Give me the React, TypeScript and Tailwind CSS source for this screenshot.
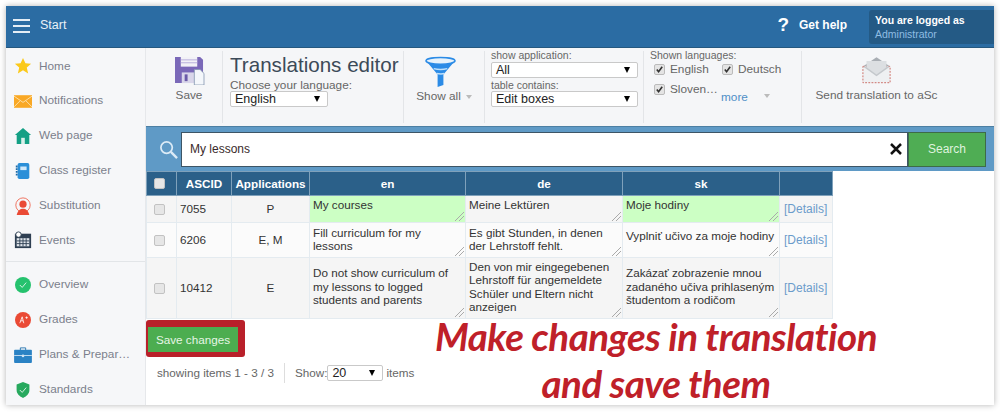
import { ReactNode } from 'react';

const Divider = () => <div className="w-px self-stretch my-[3px] bg-[#e3e5e8]" />;

const Star = () => (
  <svg viewBox="0 0 20 20" className="w-[18px] h-[18px]"><path d="M10 1l2.7 6 6.3.6-4.8 4.2 1.5 6.4L10 14.8l-5.7 3.4 1.5-6.4L1 7.6 7.3 7z" fill="#fbc91b" /></svg>
);
const Mail = () => (
  <svg viewBox="0 0 20 14" className="w-[18px] h-[13px]"><rect width="20" height="14" fill="#f9a825" /><path d="M0 1l10 7 10-7M0 13l7-7M20 13l-7-7" stroke="#fde3b0" strokeWidth="1" fill="none" /></svg>
);
const House = () => (
  <svg viewBox="0 0 20 20" className="w-[18px] h-[18px]"><path d="M10 1l9 8h-2v10H3V9H1z" fill="#14a085" /><rect x="8" y="12" width="4" height="7" fill="#d8f0ea" /></svg>
);
const Book = () => (
  <svg viewBox="0 0 20 20" className="w-[18px] h-[18px]"><rect x="4" y="1" width="13" height="18" rx="2" fill="#2b8fd8" /><rect x="7" y="5" width="7" height="4" fill="#cfe8fa" /><path d="M3 4v12" stroke="#1c6aa8" strokeWidth="2" strokeDasharray="2 1" /></svg>
);
const Person = () => (
  <svg viewBox="0 0 20 20" className="w-[18px] h-[18px]"><circle cx="10" cy="9" r="8" fill="none" stroke="#ef6a55" strokeWidth="1" /><circle cx="10" cy="8" r="4" fill="#ea4a35" /><path d="M3 20c1-5 4-7 7-7s6 2 7 7z" fill="#ea4a35" /></svg>
);
const Calendar = () => (
  <svg viewBox="0 0 20 20" className="w-[18px] h-[18px]"><rect x="1" y="3" width="18" height="16" fill="#2e3f52" /><rect x="3" y="8" width="14" height="9" fill="#dfe4ea" /><path d="M3 11h14M3 14h14M6.500 8v9M10 8v9M13.500 8v9" stroke="#2e3f52" strokeWidth="1" /><circle cx="5" cy="4" r="3" fill="#fff" stroke="#2e3f52" /></svg>
);
const Check = ({ color }: { color: string }) => (
  <svg viewBox="0 0 20 20" className="w-4 h-4"><circle cx="10" cy="10" r="10" fill={color} /><path d="M6 10l3 3 5-6" stroke="#fff" strokeWidth="1" fill="none" /></svg>
);
const Grade = () => (
  <svg viewBox="0 0 20 20" className="w-4 h-4"><circle cx="10" cy="10" r="10" fill="#ea4a35" /><path d="M6 14l3-8 2 8M7 11h3M13 7h3M14.500 5.500v3" stroke="#fff" strokeWidth="1" fill="none" /></svg>
);
const Briefcase = () => (
  <svg viewBox="0 0 20 18" className="w-[18px] h-4"><path d="M7 4V1h6v3" stroke="#1f70ad" fill="none" /><rect y="3" width="20" height="15" rx="1" fill="#2a82c4" /><rect y="9" width="20" height="1" fill="#cfe3f3" /><circle cx="10" cy="10" r="1.500" fill="#cfe3f3" /></svg>
);
const Shield = () => (
  <svg viewBox="0 0 20 20" className="w-4 h-[18px]"><path d="M10 0l8 3v7c0 5-4 8-8 10-4-2-8-5-8-10V3z" fill="#27a95e" /><path d="M6 10l3 3 5-6" stroke="#fff" strokeWidth="1" fill="none" /></svg>
);

const Floppy = () => (
  <svg viewBox="0 0 32 30" className="w-[31px] h-[29px]">
    <path d="M1 1h26l3 3v24H1z" fill="#7a68b8" />
    <rect x="7" y="1" width="17" height="10" fill="#f2f2f7" />
    <path d="M7 4h17M7 7h17" stroke="#b7aedb" />
    <rect x="8" y="17" width="14" height="11" fill="#d9d6ea" />
    <rect x="11" y="19" width="3" height="7" fill="#6a5aa8" />
    <path d="M21 14h6l4 4v12H21z" fill="#f4f7fb" stroke="#7f93ad" strokeWidth="0.800" />
  </svg>
);
const Funnel = () => (
  <svg viewBox="0 0 32 32" className="w-[31px] h-[31px] mr-[7px]">
    <path d="M1 5c3 3 27 3 30 0L19 19v11l-6 2V19z" fill="#2b8be6" />
    <path d="M9 13c4 1 10 1 14 0M12 18c3 .6 6 .6 8 0" stroke="#bfe0fb" strokeWidth="1.500" fill="none" />
    <ellipse cx="16" cy="5" rx="15" ry="3.500" fill="#e7f2fb" stroke="#2b8be6" strokeWidth="1.500" />
  </svg>
);
const Envelope = () => (
  <svg viewBox="0 0 32 30" className="w-[29px] h-[28px]">
    <path d="M16 1l15 10H1z" fill="#a9aeb4" />
    <rect x="1" y="11" width="30" height="18" fill="#eef0f2" stroke="#c9645c" strokeWidth="1" strokeDasharray="2 1.500" />
    <path d="M1 11l15 11 15-11z" fill="#c4c8cc" />
    <path d="M5 5h22v7l-11 8-11-8z" fill="#dcdfe2" />
  </svg>
);

const navTop: [ReactNode, string][] = [
  [<Star />, 'Home'],
  [<Mail />, 'Notifications'],
  [<House />, 'Web page'],
  [<Book />, 'Class register'],
  [<Person />, 'Substitution'],
  [<Calendar />, 'Events'],
];
const navBottom: [ReactNode, string][] = [
  [<Check color="#25c26e" />, 'Overview'],
  [<Grade />, 'Grades'],
  [<Briefcase />, 'Plans & Prepar…'],
  [<Shield />, 'Standards'],
];

const NavItem = ({ icon, label }: { icon: ReactNode; label: string }) => (
  <div className="h-[34.800px] flex items-center">
    <div className="w-[33px] flex justify-center">{icon}</div>
    <span className="text-[11.800px] text-[#7b7f8c]">{label}</span>
  </div>
);

const Select = ({ value, className }: { value: string; className: string }) => (
  <div className={`h-[16px] bg-white border border-[#c9c9c9] rounded-[2px] flex items-center justify-between pl-1 pr-[7px] text-[12.500px] text-[#222] ${className}`}>
    <span>{value}</span>
    <span className="w-0 h-0 border-x-[3.500px] border-x-transparent border-t-[6px] border-t-black" />
  </div>
);

const LangCheck = ({ label, className }: { label: string; className: string }) => (
  <div className={`flex items-center gap-[5px] text-[11.800px] text-[#666] ${className}`}>
    <span className="w-[11px] h-[11px] rounded-[2px] bg-[#e4e4e4] border border-[#bbb] flex items-center justify-center">
      <svg viewBox="0 0 10 10" className="w-[9px] h-[9px]"><path d="M2 5l2 2.500L8 2" stroke="#333" strokeWidth="1.800" fill="none" /></svg>
    </span>
    {label}
  </div>
);

const Box = () => <span className="block w-[11px] h-[11px] rounded-[2px] bg-[#e6e6e6] border border-[#c2c2c2]" />;

const Grip = () => (
  <svg viewBox="0 0 9 9" className="absolute right-px bottom-px w-[9px] h-[9px]"><path d="M0 9l9-9M4 9l5-5" stroke="#aaa" strokeWidth="1" /></svg>
);

const Cell = ({ text, green, pad }: { text: ReactNode; green?: boolean; pad: string }) => (
  <td className={`relative border border-[#e4ebf0] p-0 ${green ? 'bg-[#ccffc4]' : ''} ${pad}`}>
    <div className="px-[3px] leading-[13.400px] text-[#333]">{text}</div>
    <Grip />
  </td>
);

const rows = [
  { h: 'h-[27px]', bg: 'bg-[#f5f5f5]', id: '7055', app: 'P', en: 'My courses', de: 'Meine Lektüren', sk: 'Moje hodiny', green: true, pad: 'align-top pt-[2px]', skPad: 'align-top pt-[2px]' },
  { h: 'h-[35px]', bg: 'bg-[#fbfbfb]', id: '6206', app: 'E, M', en: 'Fill curriculum for my lessons', de: 'Es gibt Stunden, in denen der Lehrstoff fehlt.', sk: 'Vyplniť učivo za moje hodiny', green: false, pad: 'pb-[2px]', skPad: 'pb-[8px]' },
  { h: 'h-[61px]', bg: 'bg-[#f5f5f5]', id: '10412', app: 'E', en: 'Do not show curriculum of my lessons to logged students and parents', de: 'Den von mir eingegebenen Lehrstoff für angemeldete Schüler und Eltern nicht anzeigen', sk: 'Zakázať zobrazenie mnou zadaného učiva prihlaseným študentom a rodičom', green: false, pad: 'pb-[3px]', skPad: 'pb-[3px]' },
];

const App = () => {
  return (
    <div className="w-[1000px] h-[414px] bg-white pt-[6px] px-[6px] overflow-hidden font-['Liberation_Sans',Arial,sans-serif]">
      <div className="relative w-[988px] h-[399px] bg-white shadow-[0_0_6px_rgba(0,0,0,0.3)] flex flex-col">
        {/* top bar */}
        <div className="h-[42px] shrink-0 bg-[#2b6ca3] border-b border-[#25587f] flex items-center pl-[7px] pb-[2px] text-white">
          <div className="w-[17px] flex flex-col gap-[4px]">
            <span className="h-[2px] bg-[#e4edf5]" />
            <span className="h-[2px] bg-[#e4edf5]" />
            <span className="h-[2px] bg-[#e4edf5]" />
          </div>
          <span className="ml-[10px] text-[12.500px] text-[#e8f0f7]">Start</span>
          <span className="ml-auto text-[19px] font-bold">?</span>
          <span className="ml-[10px] mb-[1px] text-[12px] font-bold">Get help</span>
          <div className="ml-[22px] mt-[2px] w-[125px] h-[34px] bg-[#245a85] rounded-l-[3px] pl-[6px] pt-[3px] text-[10.500px] leading-[14px]">
            <div className="font-bold">You are logged as</div>
            <div className="text-[#8fbde3]">Administrator</div>
          </div>
        </div>

        <div className="flex flex-1 min-h-0">
          {/* sidebar */}
          <div className="w-[140px] shrink-0 bg-[#f6f7f9] border-r border-[#e6e8eb] pt-[1px] overflow-hidden">
            {navTop.map(([icon, label]) => <NavItem key={label} icon={icon} label={label} />)}
            <div className="h-px bg-[#e2e5e8] mt-[3px] mb-[6px]" />
            {navBottom.map(([icon, label]) => <NavItem key={label} icon={icon} label={label} />)}
          </div>

          <div className="relative flex-1 min-w-0">
            {/* toolbar */}
            <div className="h-[78px] bg-[#f5f6f8] flex text-[#666] text-[11.800px]">
              <div className="w-[76px] flex flex-col items-center pt-[8px] pl-[10px]">
                <Floppy />
                <span className="mt-[2px]">Save</span>
              </div>
              <Divider />
              <div className="w-[180px] pl-[7px] pt-[5px]">
                <div className="text-[20.600px] leading-[24px] text-[#3c4a58]">Translations editor</div>
                <div className="leading-[12px] mt-[2px]">Choose your language:</div>
                <Select value="English" className="w-[98px]" />
              </div>
              <Divider />
              <div className="w-[80px] flex flex-col items-center pt-[8px]">
                <Funnel />
                <span className="mt-[1px] flex items-center gap-[5px]">
                  Show all
                  <span className="w-0 h-0 border-x-[3.500px] border-x-transparent border-t-[4px] border-t-[#bbb]" />
                </span>
              </div>
              <Divider />
              <div className="w-[158px] pl-[6px] pt-[1px] text-[10.500px] leading-[12px]">
                <div>show application:</div>
                <Select value="All" className="w-[147px] mt-[1px]" />
                <div className="mt-[1px]">table contains:</div>
                <Select value="Edit boxes" className="w-[147px]" />
              </div>
              <Divider />
              <div className="w-[157px] pl-[6px] pt-[1px]">
                <div className="text-[10.500px] leading-[12px]">Shown languages:</div>
                <div className="flex pl-[4px]">
                  <LangCheck label="English" className="w-[68px]" />
                  <LangCheck label="Deutsch" className="" />
                </div>
                <div className="flex pl-[4px] mt-[2px] items-start">
                  <LangCheck label="Sloven…" className="w-[67px]" />
                  <span className="text-[#4f8fc7] mt-[8px]">more</span>
                  <span className="ml-[16px] mt-[13px] w-0 h-0 border-x-[3.500px] border-x-transparent border-t-[4px] border-t-[#bbb]" />
                </div>
              </div>
              <Divider />
              <div className="flex-1 flex flex-col items-center pt-[8px] pr-[43px]">
                <Envelope />
                <span className="mt-[3px]">Send translation to aSc</span>
              </div>
            </div>

            {/* search */}
            <div className="h-[45px] bg-[#5f9ac6] border-t border-[#4c7fa3] flex items-center">
              <svg viewBox="0 0 20 20" className="w-[19px] h-[19px] ml-[13px] mr-[3px] shrink-0">
                <circle cx="8" cy="8" r="6" fill="none" stroke="#dcebf6" strokeWidth="1.800" />
                <path d="M12.500 12.500L19 19" stroke="#dcebf6" strokeWidth="2.500" />
              </svg>
              <div className="w-[727px] h-[35px] bg-white border border-[#3d5566] flex items-center pl-2 pr-[5px] text-[12px] text-[#3a2a2a]">
                My lessons
                <svg viewBox="0 0 12 12" className="ml-auto w-[12px] h-[12px]"><path d="M1 1l10 10M11 1L1 11" stroke="#111" strokeWidth="2.500" /></svg>
              </div>
              <div className="w-[78px] h-[35px] bg-[#4fad54] border border-[#3d6b47] flex items-center justify-center text-[12px] text-[#dff3df]">Search</div>
            </div>

            {/* table */}
            <table className="table-fixed border-collapse w-[686px] text-[11.700px]">
              <colgroup>
                <col className="w-[30px]" />
                <col className="w-[55px]" />
                <col className="w-[78px]" />
                <col className="w-[156px]" />
                <col className="w-[157px]" />
                <col className="w-[157px]" />
                <col className="w-[53px]" />
              </colgroup>
              <thead>
                <tr className="h-[24px] bg-[#2b6089] text-white font-bold">
                  <th className="border border-[#7fa1bb] p-0 pl-[7px]"><Box /></th>
                  <th className="border border-[#7fa1bb] p-0">ASCID</th>
                  <th className="border border-[#7fa1bb] p-0">Applications</th>
                  <th className="border border-[#7fa1bb] p-0">en</th>
                  <th className="border border-[#7fa1bb] p-0">de</th>
                  <th className="border border-[#7fa1bb] p-0">sk</th>
                  <th className="border border-[#7fa1bb] p-0" />
                </tr>
              </thead>
              <tbody>
                {rows.map((r) => (
                  <tr key={r.id} className={`${r.h} ${r.bg}`}>
                    <td className="border border-[#e4ebf0] p-0 pl-[7px]"><Box /></td>
                    <td className="border border-[#e4ebf0] px-[3px] text-[#333]">{r.id}</td>
                    <td className="border border-[#e4ebf0] p-0 text-center text-[#333]">{r.app}</td>
                    <Cell text={r.en} green={r.green} pad={r.pad} />
                    <Cell text={r.de} pad={r.pad} />
                    <Cell text={r.sk} green={r.green} pad={r.skPad} />
                    <td className="border border-[#e4ebf0] pl-[4px] text-[#6b9ccb] text-[12px]">[Details]</td>
                  </tr>
                ))}
              </tbody>
            </table>

            {/* save + footer */}
            <div className="w-[99px] h-[37px] mt-[1px] bg-[#b9202a] rounded-[3px] pl-[2px] pt-[7px]">
              <div className="w-[90px] h-[25px] bg-[#4cad50] text-[#e6f5e6] text-[11.700px] flex items-center justify-center">Save changes</div>
            </div>
            <div className="flex items-center pl-[11px] mt-[6px] text-[11.700px] text-[#666]">
              <span>showing items 1 - 3 / 3</span>
              <span className="w-px h-[20px] bg-[#ddd] mx-[10px]" />
              <span>Show:</span>
              <Select value="20" className="w-[56px] mr-[3px]" />
              <span>items</span>
            </div>

            {/* handwritten note over the page */}
            <div className="absolute left-[267px] top-[265px] w-[486px] text-center text-[#bf2029] text-[38.500px] leading-[47px] font-bold italic font-['Lato',sans-serif] tracking-[-0.500px] whitespace-nowrap">
              <div>Make changes in translation</div>
              <div>and save them</div>
            </div>
          </div>
        </div>
      </div>
    </div>
  );
};

export default App;
